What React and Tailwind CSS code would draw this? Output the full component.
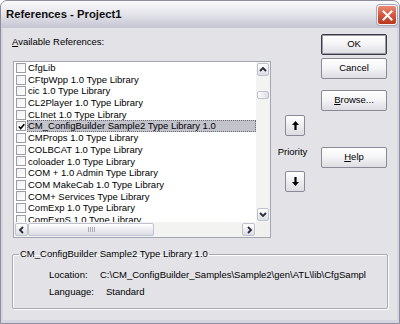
import React from "react";

const items = [
  "CfgLib",
  "CFtpWpp 1.0 Type Library",
  "cic 1.0 Type Library",
  "CL2Player 1.0 Type Library",
  "CLInet 1.0 Type Library",
  "CM_ConfigBuilder Sample2 Type Library 1.0",
  "CMProps 1.0 Type Library",
  "COLBCAT 1.0 Type Library",
  "coloader 1.0 Type Library",
  "COM + 1.0 Admin Type Library",
  "COM MakeCab 1.0 Type Library",
  "COM+ Services Type Library",
  "ComExp 1.0 Type Library",
  "ComExpS 1.0 Type Library",
];

const font = { fontFamily: '"Liberation Sans", Arial, sans-serif' };

function Chevron({ dir }) {
  const pts = {
    up: "1,5 4,2 7,5",
    down: "1,2 4,5 7,2",
    left: "5,1 2,4 5,7",
    right: "3,1 6,4 3,7",
  }[dir];
  return (
    <svg width="8" height="8" viewBox="0 0 8 8">
      <polyline points={pts} fill="none" stroke="#2a2a3a" strokeWidth="1.8" />
    </svg>
  );
}

function SBtn({ dir, className = "" }) {
  return (
    <div
      className={
        "flex items-center justify-center rounded-[2px] border border-[#bfc3cf] bg-gradient-to-b from-[#ffffff] to-[#dcdce4] " +
        className
      }
    >
      <Chevron dir={dir} />
    </div>
  );
}

function Btn({ children, def }) {
  return (
    <div
      className={
        "flex h-[21px] w-[66px] items-center justify-center rounded-[2px] bg-gradient-to-b from-[#ffffff] via-[#f4f4f6] to-[#dcdce2] text-[9.5px] text-black " +
        (def
          ? "border border-[#3c3c48] shadow-[inset_0_0_0_1px_#9a9aa8]"
          : "border border-[#8a8a96]")
      }
    >
      {children}
    </div>
  );
}

function ArrowBtn({ up }) {
  return (
    <div className="flex h-[21px] w-[20px] items-center justify-center rounded-[2px] border border-[#8a8a96] bg-gradient-to-b from-[#ffffff] to-[#dcdce2]">
      <svg width="7" height="9" viewBox="0 0 7 9" className={up ? "" : "rotate-180"}>
        <path d="M3.5 0 L7 4 H4.6 V9 H2.4 V4 H0 Z" fill="#000" />
      </svg>
    </div>
  );
}

export default function App() {
  return (
    <div
      style={font}
      className="flex h-[324px] w-[400px] flex-col overflow-hidden rounded-t-[7px] border border-[#8d8d9e] bg-[#c9c9d6]"
    >
      {/* Title bar */}
      <div className="flex h-[27px] items-center justify-between bg-gradient-to-b from-[#fbfbfd] via-[#e3e3ea] to-[#c5c5d3] pl-[5px] pr-[2px]">
        <span className="text-[11.3px] font-bold text-[#101010]">References - Project1</span>
        <div className="mt-[1px] flex h-[20px] w-[20px] items-center justify-center rounded-[3px] border border-[#f4f4f8] bg-gradient-to-b from-[#e98a74] via-[#d5573c] to-[#b8361e] shadow-[0_0_0_1px_#a8a8b8]">
          <svg width="11" height="11" viewBox="0 0 11 11">
            <path d="M1.5 1.5 L9.5 9.5 M9.5 1.5 L1.5 9.5" stroke="#fff" strokeWidth="2" strokeLinecap="square" />
          </svg>
        </div>
      </div>

      {/* Body */}
      <div className="flex flex-1 flex-col border-x-[2px] border-b-[3px] border-[#d6d6e0] bg-[#e2e2e7] text-[9.5px] text-black">
        <div className="flex pl-[9px]">
          {/* Left column */}
          <div className="flex w-[259px] flex-col">
            <div className="mt-[8px] h-[12px] leading-[12px]">
              <span className="underline">A</span>vailable References:
            </div>
            <div className="ml-[1px] mt-[13px] flex h-[177px] w-[258px] flex-col border border-[#a1a6b2] bg-white">
              <div className="flex h-[160px]">
                <div className="h-full w-[242px] overflow-hidden">
                  {items.map((t, i) => {
                    const sel = i === 5;
                    return (
                      <div key={t} className="flex h-[11.7px] items-center pl-[2px]">
                        <div className="flex h-[10px] w-[10px] shrink-0 items-center justify-center border border-[#9c9ca6] bg-gradient-to-br from-[#f0f0f2] to-[#ffffff]">
                          {sel && (
                            <svg width="7" height="7" viewBox="0 0 7 7">
                              <polyline points="0.8,3.5 2.7,5.6 6.3,1.2" fill="none" stroke="#000" strokeWidth="1.6" />
                            </svg>
                          )}
                        </div>
                        <div
                          className={
                            "ml-[1px] h-full flex-1 whitespace-nowrap pl-[1px] leading-[11.7px] " +
                            (sel ? "bg-[#c3c3cc] outline outline-1 outline-dotted outline-[#6a6a70] -outline-offset-1" : "")
                          }
                        >
                          {t}
                        </div>
                      </div>
                    );
                  })}
                </div>
                {/* vertical scrollbar */}
                <div className="flex h-full w-[14px] flex-col bg-[#f3f3f1] p-[1px]">
                  <SBtn dir="up" className="h-[13px] w-[12px]" />
                  <div className="mt-[15px] h-[8px] w-[12px] rounded-[2px] border border-[#bfc3cf] bg-gradient-to-r from-[#ffffff] to-[#dcdce4]" />
                  <div className="flex-1" />
                  <SBtn dir="down" className="h-[13px] w-[12px]" />
                </div>
              </div>
              {/* horizontal scrollbar */}
              <div className="flex h-[15px]">
                <div className="flex w-[242px] bg-[#f3f3f1] p-[1px]">
                  <SBtn dir="left" className="h-[13px] w-[13px]" />
                  <div className="flex h-[13px] w-[126px] items-center justify-center rounded-[2px] border border-[#bfc3cf] bg-gradient-to-b from-[#ffffff] to-[#dcdce4]">
                    <div className="flex gap-[1px]">
                      <div className="h-[5px] w-[1px] bg-[#a8a8b4]" />
                      <div className="h-[5px] w-[1px] bg-[#a8a8b4]" />
                      <div className="h-[5px] w-[1px] bg-[#a8a8b4]" />
                      <div className="h-[5px] w-[1px] bg-[#a8a8b4]" />
                    </div>
                  </div>
                  <div className="flex-1" />
                  <SBtn dir="right" className="h-[13px] w-[13px]" />
                </div>
                <div className="w-[14px] bg-[#f0f0ee]" />
              </div>
            </div>
          </div>

          {/* Priority column */}
          <div className="ml-[7px] flex w-[34px] flex-col items-center">
            <div className="mt-[87px]">
              <ArrowBtn up />
            </div>
            <div className="mt-[10px] h-[12px] pr-[5px] leading-[12px]">Priority</div>
            <div className="mt-[13px]">
              <ArrowBtn />
            </div>
          </div>

          {/* Buttons column */}
          <div className="ml-[9px] flex flex-col">
            <div className="mt-[6px]">
              <Btn def>OK</Btn>
            </div>
            <div className="mt-[3px]">
              <Btn>Cancel</Btn>
            </div>
            <div className="mt-[11px]">
              <Btn>
                <span className="underline">B</span>rowse...
              </Btn>
            </div>
            <div className="mt-[36px]">
              <Btn>
                <span className="underline">H</span>elp
              </Btn>
            </div>
          </div>
        </div>

        {/* Group box */}
        <fieldset className="ml-[9px] mt-[10px] h-[61px] w-[376px] rounded-[2px] border border-[#a9a9b2] shadow-[inset_1px_1px_0_#ffffff,1px_1px_0_#ffffff]">
          <legend className="ml-[6px] h-[12px] px-[1px] leading-[12px]">
            CM_ConfigBuilder Sample2 Type Library 1.0
          </legend>
          <div className="mt-[9px] flex h-[12px] items-center leading-[12px]">
            <span className="ml-[36px] w-[51px]">Location:</span>
            <span className="whitespace-nowrap">
              C:\CM_ConfigBuilder_Samples\Sample2\gen\ATL\lib\CfgSampl
            </span>
          </div>
          <div className="mt-[5px] flex h-[12px] items-center leading-[12px]">
            <span className="ml-[36px] w-[57px]">Language:</span>
            <span>Standard</span>
          </div>
        </fieldset>
      </div>
    </div>
  );
}
